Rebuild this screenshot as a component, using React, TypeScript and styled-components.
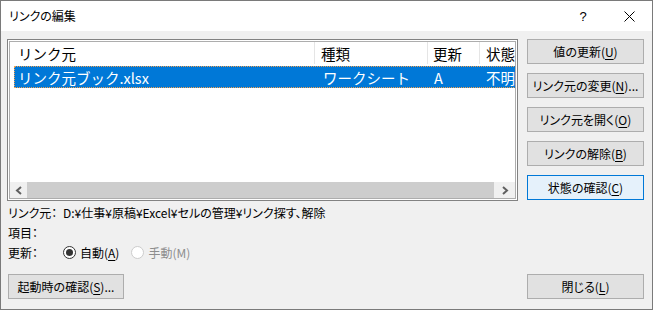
import styled, { createGlobalStyle } from "styled-components";

const GlobalStyle = createGlobalStyle`
  html, body {
    margin: 0;
    padding: 0;
    background: #ffffff;
  }
  * {
    box-sizing: border-box;
  }
`;

const uiFont = `"Noto Sans CJK JP", "Noto Sans", sans-serif`;

const Window = styled.div`
  width: 653px;
  height: 310px;
  border: 1px solid #7a7a7a;
  display: flex;
  flex-direction: column;
  font-family: ${uiFont};
  font-feature-settings: "palt";
  font-size: 12px;
  color: #000;
  overflow: hidden;
`;

const TitleBar = styled.div`
  height: 30px;
  flex: none;
  background: #ffffff;
  display: flex;
  align-items: center;
`;

const Title = styled.div`
  flex: 1;
  padding-left: 8px;
  font-size: 12px;
  line-height: 30px;
`;

const CaptionButton = styled.div`
  width: 46px;
  height: 30px;
  display: flex;
  align-items: center;
  justify-content: center;
  font-family: "Liberation Sans", sans-serif;
  font-size: 13px;
`;

const Body = styled.div`
  flex: 1;
  background: #f0f0f0;
  padding: 8px 8px 10px 6px;
  display: flex;
  flex-direction: column;
`;

const TopArea = styled.div`
  display: flex;
  gap: 9px;
`;

const ListOuter = styled.div`
  width: 511px;
  height: 162px;
  border: 1px solid #828282;
  padding: 1px;
  background: #ffffff;
`;

const ListInner = styled.div`
  height: 100%;
  border: 1px solid #adadad;
  display: flex;
  flex-direction: column;
  overflow: hidden;
  font-feature-settings: normal;
  font-size: 14.5px;
`;

const HeaderRow = styled.div`
  height: 22px;
  flex: none;
  display: grid;
  grid-template-columns: 304px 113px 52px 80px;
  align-items: center;
`;

const HeaderCell = styled.div<{ $pad: number; $sep?: boolean }>`
  height: 100%;
  display: flex;
  align-items: center;
  padding-left: ${(p) => p.$pad}px;
  border-left: ${(p) => (p.$sep ? "1px solid #e5e5e5" : "none")};
  white-space: nowrap;
  overflow: hidden;
`;

const DataRow = styled.div`
  margin: 2px 0 0 4px;
  height: 22px;
  flex: none;
  width: 560px;
  display: grid;
  grid-template-columns: 300px 113px 52px 80px;
  align-items: center;
  background: #0078d7;
  color: #ffffff;
  border: 1px dotted #f0a050;
  border-right: none;
`;

const DataCell = styled.div<{ $pad: number }>`
  padding-left: ${(p) => p.$pad}px;
  white-space: nowrap;
  overflow: hidden;
`;

const Spacer = styled.div`
  flex: 1;
`;

const ScrollBar = styled.div`
  height: 16px;
  flex: none;
  display: flex;
  background: #f0f0f0;
`;

const ScrollArrow = styled.div<{ $w: number }>`
  width: ${(p) => p.$w}px;
  flex: none;
  display: flex;
  align-items: center;
  justify-content: center;
`;

const ScrollThumb = styled.div`
  flex: 1;
  background: #cdcdcd;
`;

const ButtonColumn = styled.div`
  width: 117px;
  display: flex;
  flex-direction: column;
  gap: 9px;
`;

const Button = styled.div<{ $focused?: boolean; $w?: number }>`
  width: ${(p) => p.$w ?? 117}px;
  height: 25px;
  display: flex;
  align-items: center;
  justify-content: center;
  background: ${(p) => (p.$focused ? "#e5f1fb" : "#e1e1e1")};
  border: 1px solid ${(p) => (p.$focused ? "#0078d7" : "#adadad")};
  font-size: 12px;
  white-space: nowrap;
`;

const Key = styled.span`
  text-decoration: underline;
  text-underline-offset: 2px;
`;

const Info = styled.div`
  margin-top: 1px;
  padding-left: 1px;
  display: grid;
  grid-template-columns: 55px 1fr;
  grid-auto-rows: 20px;
  align-items: center;
`;

const RadioGroup = styled.div`
  display: flex;
  align-items: center;
`;

const RadioItem = styled.div<{ $disabled?: boolean }>`
  display: flex;
  align-items: center;
  gap: 4px;
  margin-right: 12px;
  color: ${(p) => (p.$disabled ? "#8d8d8d" : "#000")};
`;

const RadioCircle = styled.div<{ $checked?: boolean; $disabled?: boolean }>`
  width: 13px;
  height: 13px;
  border-radius: 50%;
  border: 1px solid ${(p) => (p.$disabled ? "#cccccc" : "#333333")};
  background: #ffffff;
  display: flex;
  align-items: center;
  justify-content: center;

  &::after {
    content: "";
    display: ${(p) => (p.$checked ? "block" : "none")};
    width: 7px;
    height: 7px;
    border-radius: 50%;
    background: #333333;
  }
`;

const BottomRow = styled.div`
  margin-top: auto;
  display: flex;
  justify-content: space-between;
  padding-left: 1px;
`;

const Chevron = ({ dir }: { dir: "left" | "right" }) => (
  <svg width="8" height="9" viewBox="0 0 8 9">
    <polyline
      points={dir === "left" ? "6,1 2,4.5 6,8" : "2,1 6,4.5 2,8"}
      fill="none"
      stroke="#606060"
      strokeWidth="2"
    />
  </svg>
);

export default function App() {
  return (
    <>
      <GlobalStyle />
      <Window>
        <TitleBar>
          <Title>リンクの編集</Title>
          <CaptionButton>?</CaptionButton>
          <CaptionButton>
            <svg width="11" height="11" viewBox="0 0 11 11">
              <path d="M0.5 0.5 L10.5 10.5 M10.5 0.5 L0.5 10.5" stroke="#000" strokeWidth="1" />
            </svg>
          </CaptionButton>
        </TitleBar>
        <Body>
          <TopArea>
            <ListOuter>
              <ListInner>
                <HeaderRow>
                  <HeaderCell $pad={8}>リンク元</HeaderCell>
                  <HeaderCell $pad={6} $sep>種類</HeaderCell>
                  <HeaderCell $pad={5} $sep>更新</HeaderCell>
                  <HeaderCell $pad={6} $sep>状態</HeaderCell>
                </HeaderRow>
                <DataRow>
                  <DataCell $pad={3}>リンク元ブック.xlsx</DataCell>
                  <DataCell $pad={8}>ワークシート</DataCell>
                  <DataCell $pad={6}>A</DataCell>
                  <DataCell $pad={6}>不明</DataCell>
                </DataRow>
                <Spacer />
                <ScrollBar>
                  <ScrollArrow $w={17}>
                    <Chevron dir="left" />
                  </ScrollArrow>
                  <ScrollThumb />
                  <ScrollArrow $w={21}>
                    <Chevron dir="right" />
                  </ScrollArrow>
                </ScrollBar>
              </ListInner>
            </ListOuter>
            <ButtonColumn>
              <Button>
                値の更新(<Key>U</Key>)
              </Button>
              <Button>
                リンク元の変更(<Key>N</Key>)...
              </Button>
              <Button>
                リンク元を開く(<Key>O</Key>)
              </Button>
              <Button>
                リンクの解除(<Key>B</Key>)
              </Button>
              <Button $focused>
                状態の確認(<Key>C</Key>)
              </Button>
            </ButtonColumn>
          </TopArea>
          <Info>
            <div>リンク元：</div>
            <div>D:¥仕事¥原稿¥Excel¥セルの管理¥リンク探す、解除</div>
            <div>項目：</div>
            <div />
            <div>更新：</div>
            <RadioGroup>
              <RadioItem>
                <RadioCircle $checked />
                <span>
                  自動(<Key>A</Key>)
                </span>
              </RadioItem>
              <RadioItem $disabled>
                <RadioCircle $disabled />
                <span>手動(M)</span>
              </RadioItem>
            </RadioGroup>
          </Info>
          <BottomRow>
            <Button $w={116}>
              起動時の確認(<Key>S</Key>)...
            </Button>
            <Button>
              閉じる(<Key>L</Key>)
            </Button>
          </BottomRow>
        </Body>
      </Window>
    </>
  );
}
